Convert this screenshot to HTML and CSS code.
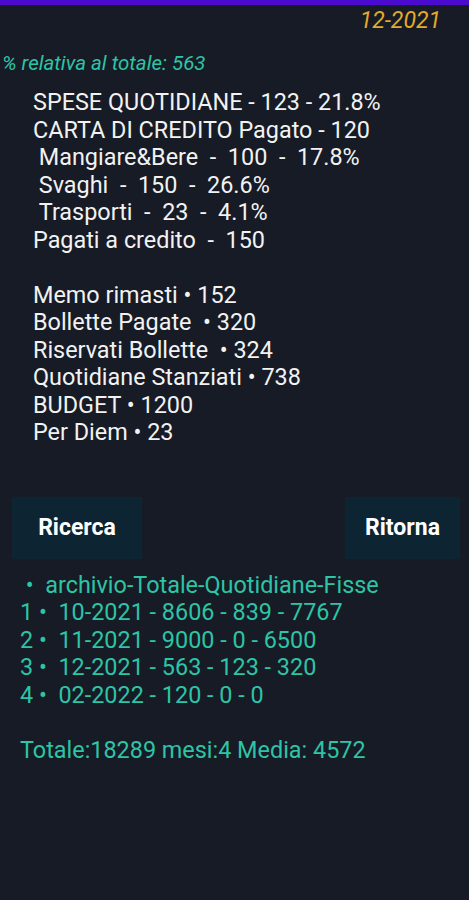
FILE: index.html
```html
<!DOCTYPE html>
<html lang="it">
<head>
    <meta charset="UTF-8">
    <meta name="viewport" content="width=device-width, initial-scale=1.0">
    <title>Spese</title>
    <link rel="stylesheet" href="styles.css">
</head>
<body>
    <div class="topbar"></div>
    <div class="month">12-2021</div>
    <div class="relativa">% relativa al totale: 563</div>

    <div class="summary">
        <div>SPESE QUOTIDIANE - 123 - 21.8%</div>
        <div>CARTA DI CREDITO Pagato - 120</div>
        <div>&nbsp;Mangiare&amp;Bere &nbsp;- &nbsp;100 &nbsp;- &nbsp;17.8%</div>
        <div>&nbsp;Svaghi &nbsp;- &nbsp;150 &nbsp;- &nbsp;26.6%</div>
        <div>&nbsp;Trasporti &nbsp;- &nbsp;23 &nbsp;- &nbsp;4.1%</div>
        <div>Pagati a credito &nbsp;- &nbsp;150</div>
        <div>&nbsp;</div>
        <div>Memo rimasti • 152</div>
        <div>Bollette Pagate &nbsp;• 320</div>
        <div>Riservati Bollette &nbsp;• 324</div>
        <div>Quotidiane Stanziati • 738</div>
        <div>BUDGET • 1200</div>
        <div>Per Diem • 23</div>
    </div>

    <div class="actions">
        <button class="btn btn-search">Ricerca</button>
        <button class="btn btn-back">Ritorna</button>
    </div>

    <div class="archive">
        <div>&nbsp;• &nbsp;archivio-Totale-Quotidiane-Fisse</div>
        <div>1 • &nbsp;10-2021 - 8606 - 839 - 7767</div>
        <div>2 • &nbsp;11-2021 - 9000 - 0 - 6500</div>
        <div>3 • &nbsp;12-2021 - 563 - 123 - 320</div>
        <div>4 • &nbsp;02-2022 - 120 - 0 - 0</div>
        <div>&nbsp;</div>
        <div>Totale:18289 mesi:4 Media: 4572</div>
    </div>
</body>
</html>
```

FILE: styles.css
```css
html, body { margin: 0; padding: 0; }
body {
    background-color: #161b25;
    font-family: Roboto, "Liberation Sans", sans-serif;
    width: 469px;
    min-height: 900px;
}
.topbar { height: 5px; background-color: #4a0bcf; }
.month {
    color: #e3aa2c;
    font-style: italic;
    font-size: 23px;
    text-align: right;
    padding: 4px 28px 0 0;
    line-height: 24px;
}
.relativa {
    color: #2ec4a6;
    font-style: italic;
    font-size: 20.5px;
    padding: 19px 0 0 2px;
    line-height: 22px;
}
.summary {
    color: #f2f2f2;
    font-size: 23.4px;
    line-height: 27.5px;
    padding: 15px 0 0 33px;
}
.actions {
    display: flex;
    justify-content: space-between;
    padding: 50px 9px 0 12px;
}
.btn {
    border: none;
    background-color: #0d2433;
    color: #ffffff;
    font-family: Roboto, "Liberation Sans", sans-serif;
    font-weight: bold;
    font-size: 23px;
    height: 62px;
    padding: 0;
}
.btn-search { width: 130px; }
.btn-back { width: 115px; }
.archive {
    color: #2ec4a6;
    font-size: 23.4px;
    line-height: 27.5px;
    padding: 13px 0 0 20px;
}
```
